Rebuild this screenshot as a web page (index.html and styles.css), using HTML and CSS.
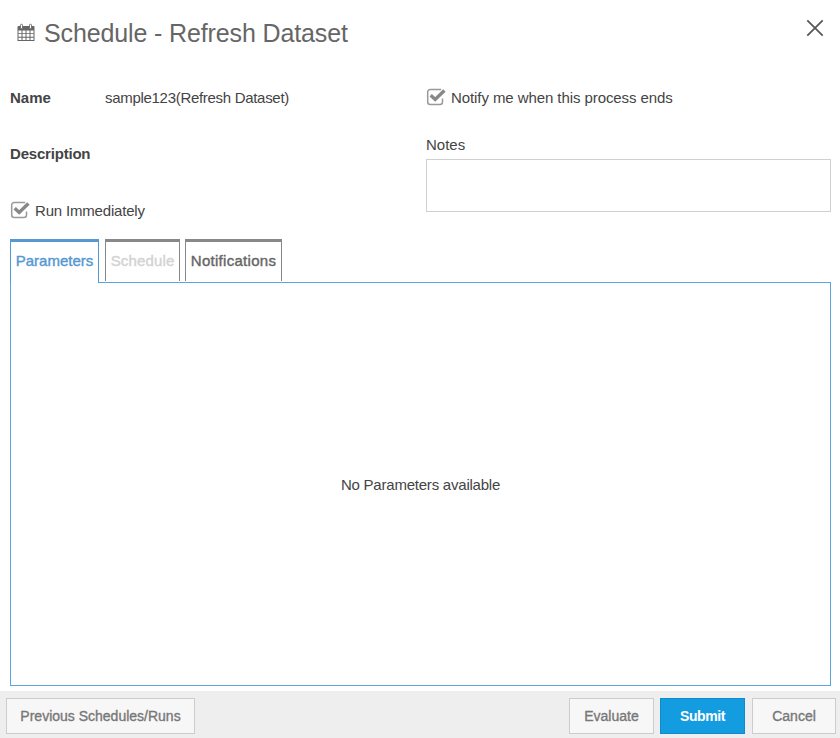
FILE: index.html
```html
<!DOCTYPE html>
<html lang="en">
<head>
<meta charset="utf-8">
<title>Schedule - Refresh Dataset</title>
<link rel="stylesheet" href="styles.css">
</head>
<body>
<div class="dialog">
  <header class="header">
    <svg class="calendar" width="18" height="19" viewBox="0 0 18 19">
      <path fill="#666" d="M1.500 3H16.500a1 1 0 0 1 1 1V18H.5V4a1 1 0 0 1 1-1z"/>
      <path fill="#fff" d="M1.500 7.500h3v2.700h-3zM5.500 7.500h3v2.700h-3zM9.500 7.500h3v2.700h-3zM13.500 7.500h3v2.700h-3zM1.500 11.100h3v2.700h-3zM5.500 11.100h3v2.700h-3zM9.500 11.100h3v2.700h-3zM13.500 11.100h3v2.700h-3zM1.500 14.700h3V17h-3zM5.500 14.700h3V17h-3zM9.500 14.700h3V17h-3zM13.500 14.700h3V17h-3z"/>
      <rect x="3.500" y="1.200" width="2" height="4.500" rx="1" fill="#fff" stroke="#666" stroke-width=".9"/>
      <rect x="12.500" y="1.200" width="2" height="4.500" rx="1" fill="#fff" stroke="#666" stroke-width=".9"/>
    </svg>
    <h1><span>Schedule - Refresh Dataset</span></h1>
    <svg class="close" width="18" height="18" viewBox="0 0 18 18"><path d="M1.300 1.300L16.700 16.700M16.700 1.300L1.300 16.700" stroke="#555" stroke-width="1.700"/></svg>
  </header>
  <section class="form">
    <div class="left">
      <div class="row"><b class="name">Name</b><span class="value">sample123(Refresh Dataset)</span></div>
      <div class="row second"><b class="description">Description</b></div>
      <label class="check run"><svg width="20" height="18" viewBox="0 0 20 18"><path d="M16.500 10.500v3.500a2.500 2.500 0 0 1-2.500 2.500H4.200A2.500 2.500 0 0 1 1.700 14V4A2.500 2.500 0 0 1 4.200 1.500h11" fill="none" stroke="#999" stroke-width="1.500"/><path d="M4.700 7.200L9.200 11.500L18.400 2.500" fill="none" stroke="#888" stroke-width="3.400"/></svg><span class="run-text">Run Immediately</span></label>
    </div>
    <div class="right">
      <label class="check"><svg width="20" height="18" viewBox="0 0 20 18"><path d="M16.500 10.500v3.500a2.500 2.500 0 0 1-2.500 2.500H4.200A2.500 2.500 0 0 1 1.700 14V4A2.500 2.500 0 0 1 4.200 1.500h11" fill="none" stroke="#999" stroke-width="1.500"/><path d="M4.700 7.200L9.200 11.500L18.400 2.500" fill="none" stroke="#888" stroke-width="3.400"/></svg><span class="notify-text">Notify me when this process ends</span></label>
      <div class="notes-label"><span>Notes</span></div>
      <div class="notes"></div>
    </div>
  </section>
  <nav class="tabs">
    <div class="tab active"><span>Parameters</span></div>
    <div class="tab disabled"><span>Schedule</span></div>
    <div class="tab notifications"><span>Notifications</span></div>
  </nav>
  <main class="panel"><span>No Parameters available</span></main>
  <footer class="footer">
    <button class="btn previous"><span>Previous Schedules/Runs</span></button>
    <button class="btn evaluate"><span>Evaluate</span></button>
    <button class="btn submit"><span>Submit</span></button>
    <button class="btn cancel"><span>Cancel</span></button>
  </footer>
</div>
</body>
</html>
```
FILE: styles.css
```css
* { box-sizing: border-box; }
body { margin: 0; background: #fff; color: #444; font: 15px/20px "Liberation Sans", Arial, sans-serif; }
.dialog { width: 840px; height: 738px; display: flex; flex-direction: column; overflow: hidden; white-space: nowrap; }
.header { height: 88px; flex: none; display: flex; align-items: flex-start; padding: 19px 16px 0 17px; }
.calendar { margin: 4px 9px 0 0; }
h1 { margin: -1px 0 0; color: #666; font-size: 25px; font-weight: 400; line-height: 30px; letter-spacing: -.13px; }
.close { margin-left: auto; }
.form { height: 151px; flex: none; display: flex; padding: 0 9px 0 10px; }
.left { width: 416px; }
.row { display: flex; height: 20px; }
.row b { width: 95px; font-weight: 700; letter-spacing: -.2px; }
.row .name { letter-spacing: 0; }
.second { margin-top: 36px; }
.value { letter-spacing: -.3px; }
.right { width: 405px; }
.check { display: flex; height: 20px; gap: 5px; align-items: flex-start; }
.notify-text { letter-spacing: -.08px; }
.run-text { letter-spacing: -.18px; }
.run { margin-top: 37px; }
.notes-label { margin-top: 27px; height: 24px; }
.notes { height: 53px; border: 1px solid #d0d0d0; }
.tabs { height: 43px; flex: none; display: flex; padding-left: 10px; }
.tab { height: 43px; border: 1px solid #888; border-top: 3px solid #888; border-bottom: 0; color: #666; display: flex; justify-content: center; line-height: 38px; -webkit-text-stroke: .4px currentColor; }
.active { width: 89px; height: 44px; color: #5698d2; border-color: #5698d2; background: #fff; position: relative; margin-right: 6px; }
.disabled { width: 75px; height: 42px; color: #d3d3d3; margin-right: 5px; letter-spacing: .15px; }
.notifications { width: 97px; height: 42px; letter-spacing: .28px; }
.panel { height: 404px; flex: none; margin: 0 9px 5px 10px; padding-top: 2px; border: 1px solid #5ba7dd; display: flex; align-items: center; justify-content: center; letter-spacing: -.22px; }
.footer { height: 47px; flex: none; display: flex; background: #eee; padding: 7px 4px 0 6px; }
.btn { height: 36px; padding: 0; border: 1px solid #ccc; border-radius: 0; background: #f7f7f7; color: #777; font: 14px/32px "Liberation Sans", Arial, sans-serif; -webkit-text-stroke: .35px currentColor; }
.previous { width: 189px; margin-right: auto; }
.evaluate { width: 85px; margin-right: 6px; }
.submit { width: 85px; margin-right: 7px; color: #fff; background: #139ce0; border-color: #0d8bce; font-weight: 700; letter-spacing: -.4px; -webkit-text-stroke: 0; }
.cancel { width: 84px; }
```
